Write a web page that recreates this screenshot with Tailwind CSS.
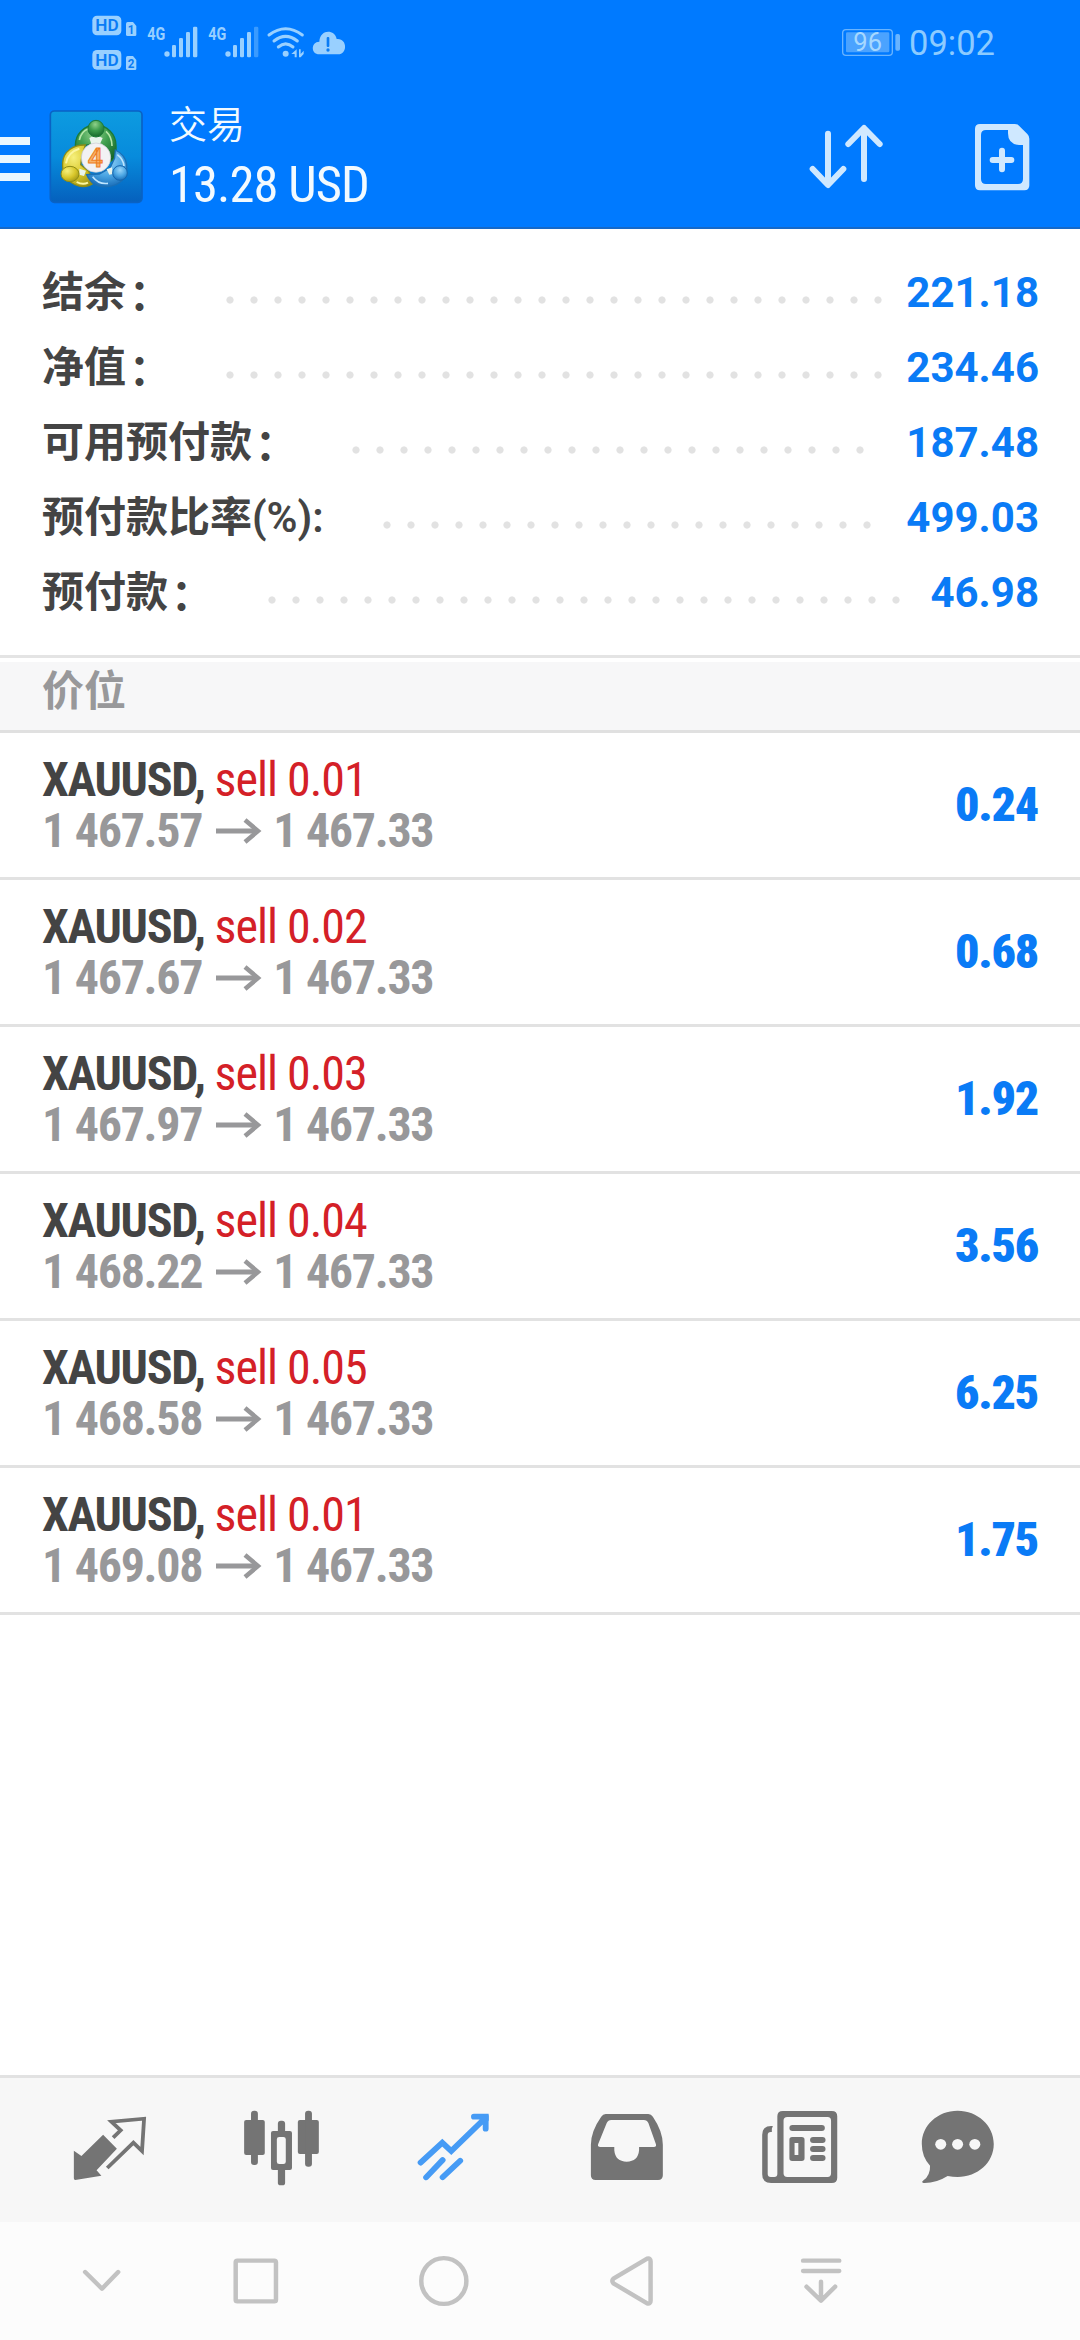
<!DOCTYPE html>
<html lang="zh-CN">
<head>
<meta charset="utf-8">
<title>交易</title>
<script src="https://cdn.jsdelivr.net/npm/@tailwindcss/browser@4"></script>
</head>
<body class="flex h-[2340px] w-[1080px] flex-col overflow-hidden bg-white font-['Roboto','Noto_Sans_CJK_SC',sans-serif]">

<header class="h-[229px] shrink-0 border-b-2 border-[#1669c8] bg-[#007aff]">
  <!-- status bar -->
  <div class="flex h-[84px] pl-[60px]">
    <svg class="h-[84px] w-[320px]" viewBox="0 0 960 252" fill="#99d0ff">
      <rect x="97" y="47" width="87" height="59" rx="14"/>
      <rect x="97" y="150" width="87" height="59" rx="14"/>
      <path d="M203 66h16l10 12v26q0 4-4 4h-22q-5 0-5-4V71q0-5 5-5z"/>
      <path d="M203 168h16l10 12v26q0 4-4 4h-22q-5 0-5-4v-33q0-5 5-5z"/>
      <g fill="#0a7cf5" font-family="Roboto" font-weight="700">
        <text x="106" y="94" font-size="48" font-weight="600" textLength="70" lengthAdjust="spacingAndGlyphs">HD</text>
        <text x="106" y="197" font-size="48" font-weight="600" textLength="70" lengthAdjust="spacingAndGlyphs">HD</text>
        <text x="203" y="102" font-size="36" textLength="20" lengthAdjust="spacingAndGlyphs">1</text>
        <text x="203" y="204" font-size="36" textLength="20" lengthAdjust="spacingAndGlyphs">2</text>
      </g>
      <g font-family="Roboto" font-weight="700" font-size="57">
        <text x="262" y="121" textLength="54" lengthAdjust="spacingAndGlyphs">4G</text>
        <text x="445" y="121" textLength="54" lengthAdjust="spacingAndGlyphs">4G</text>
      </g>
      <circle cx="321" cy="162" r="8"/>
      <rect x="336" y="135" width="12" height="37" rx="4"/>
      <rect x="357" y="114" width="12" height="58" rx="4"/>
      <rect x="378" y="96" width="12" height="76" rx="4"/>
      <rect x="399" y="80" width="13" height="92" rx="4"/>
      <circle cx="504" cy="162" r="8"/>
      <rect x="519" y="135" width="12" height="37" rx="4"/>
      <rect x="540" y="114" width="12" height="58" rx="4"/>
      <rect x="561" y="96" width="12" height="76" rx="4"/>
      <rect x="582" y="80" width="13" height="92" rx="4" fill="#3a9bff"/>
      <g fill="none" stroke="#99d0ff" stroke-width="9" stroke-linecap="round">
        <path d="M627 105Q677 67 727 105"/>
        <path d="M642 123Q677 95 712 123"/>
        <path d="M655 141Q677 122 699 141"/>
      </g>
      <circle cx="677" cy="161" r="9"/>
      <path d="M710 148v24h-6v-10h-10zM717 148h5v14l9-10v10l-9 10h-5z"/>
      <path d="M778 163c-26 0-26-38 0-38 2-38 46-38 52-8 32-4 34 46 4 46z"/>
      <rect x="800" y="111" width="8" height="30" rx="3" fill="#0a7cf5"/>
      <circle cx="804" cy="150" r="5" fill="#0a7cf5"/>
    </svg>
    <svg class="ml-[451px] h-[84px] w-[70px]" viewBox="150 0 210 252">
      <rect x="185" y="89" width="149" height="77" rx="10" fill="none" stroke="#69b4ff" stroke-width="4"/>
      <rect x="195" y="97" width="130" height="60" rx="4" fill="#4ba3ff"/>
      <rect x="343" y="102" width="14" height="50" rx="5" fill="#69b4ff"/>
      <text x="217" y="152" font-family="Roboto" font-size="75" fill="#a6d8ff" textLength="86" lengthAdjust="spacingAndGlyphs">96</text>
    </svg>
    <span class="mt-[25px] ml-[8px] h-[36px] text-[34.5px] leading-[36px] text-[#8ccbff]">09:02</span>
  </div>
  <!-- title bar -->
  <div class="flex h-[143px]">
    <div class="flex w-[30px] flex-col gap-[10px] pt-[53px]">
      <i class="h-[8px] bg-[#eaf7ff]"></i><i class="h-[8px] bg-[#eaf7ff]"></i><i class="h-[8px] bg-[#eaf7ff]"></i>
    </div>
    <svg class="mt-[22px] ml-[16px] h-[100px] w-[100px]" viewBox="0 0 300 300">
      <defs>
        <linearGradient id="bg" x1="0" y1="0" x2="0" y2="1"><stop offset="0" stop-color="#0d9be0"/><stop offset=".5" stop-color="#078bdc"/><stop offset="1" stop-color="#0560bd"/></linearGradient>
        <radialGradient id="gr" cx=".45" cy=".25" r=".8"><stop offset="0" stop-color="#8fd08a"/><stop offset=".45" stop-color="#3f9e4e"/><stop offset="1" stop-color="#136327"/></radialGradient>
        <radialGradient id="ye" cx=".35" cy=".3" r=".9"><stop offset="0" stop-color="#f6f07c"/><stop offset=".5" stop-color="#d8c62a"/><stop offset="1" stop-color="#8a8412"/></radialGradient>
        <radialGradient id="bl" cx=".5" cy=".3" r=".8"><stop offset="0" stop-color="#9ad6fa"/><stop offset=".5" stop-color="#4aa5e3"/><stop offset="1" stop-color="#0a5cab"/></radialGradient>
      </defs>
      <rect x="13" y="15" width="275" height="274" rx="12" fill="url(#bg)" stroke="#0a62c4" stroke-width="5"/>
      <path d="M88 118A61 61 0 0 1 210 118C212 140 206 160 192 168L168 150 148 112 118 118Q98 122 90 132z" fill="url(#gr)" stroke="#1c7a38" stroke-width="4"/>
      <path d="M100 102q5-26 28-34M180 76q18 16 18 44" fill="none" stroke="#b5e6a8" stroke-width="5"/>
      <path d="M118 117C82 116 52 136 50 170Q48 190 58 210C80 244 118 250 144 230L128 196 104 176 108 150z" fill="url(#ye)" stroke="#8e8c16" stroke-width="4"/>
      <path d="M60 172q6-34 40-44M92 228q18 10 34 2" fill="none" stroke="#fbf6a0" stroke-width="6"/>
      <path d="M122 206Q140 246 184 242C222 240 246 214 242 176Q238 146 208 132L206 156 192 186 160 204z" fill="url(#bl)" stroke="#1b6fb5" stroke-width="4"/>
      <path d="M140 212q18 24 46 20M214 146q18 14 20 34" fill="none" stroke="#bfe6ff" stroke-width="5"/>
      <path d="M130 96q18-12 40 0l-8 18h-26zM100 188l20 6-6 16-14-4zM182 190l16-6 2 20-10 2z" fill="#e9f4ec"/>
      <ellipse cx="150" cy="68" rx="24" ry="25" fill="url(#gr)" stroke="#1c7a38" stroke-width="3"/>
      <ellipse cx="72" cy="204" rx="27" ry="23" fill="url(#ye)" stroke="#8e8c16" stroke-width="3"/>
      <ellipse cx="222" cy="201" rx="22" ry="22" fill="url(#bl)" stroke="#1565ad" stroke-width="3"/>
      <circle cx="150" cy="155" r="44" fill="#f2f1f4" stroke="#c9ccd2" stroke-width="2"/>
      <text x="148" y="183" text-anchor="middle" font-family="Roboto" font-size="80" font-weight="600" fill="#f7b26c" stroke="#ee7d1d" stroke-width="3">4</text>
    </svg>
    <div class="ml-[23px] flex flex-col text-[#f2faff]">
      <span class="mt-[18px] h-[46px] text-[38px] leading-[46px] font-[350]">交易</span>
      <span class="mt-[7px] h-[60px] text-[50.5px] leading-[60px] tracking-[-0.9px] font-['Roboto_Condensed','Roboto'] font-stretch-[75%]">13.28 USD</span>
    </div>
    <svg class="mt-[31px] ml-auto h-[80px] w-[90px]" viewBox="75 345 270 240" fill="none" stroke="#cfe8ff" stroke-width="18" stroke-linecap="round" stroke-linejoin="round">
      <path d="M144 401V552M98 507l46 48 46-48M252 537V388M205 432l47-48 47 48"/>
    </svg>
    <svg class="mt-[31px] mr-[40px] ml-[75px] h-[80px] w-[70px]" viewBox="570 345 210 240">
      <path fill="#cfe8ff" fill-rule="evenodd" d="M600 372h104q8 0 13 5l25 25q6 6 6 14v140q0 15-15 15H600q-15 0-15-15V387q0-15 15-15zM618 390q-15 0-15 15v132q0 15 15 15h96q15 0 15-15V435h-12q-33-2-33-35v-10z"/>
      <path d="M638 480h56M666 452v56" stroke="#cfe8ff" stroke-width="18" stroke-linecap="round"/>
    </svg>
  </div>
</header>

<main class="flex-1">
  <!-- account summary -->
  <section class="flex h-[426px] flex-col pt-[26px] pr-[41px] pl-[42px] text-[42px] font-semibold text-[#444]">
    <div class="flex h-[75px] items-center"><span>结余<span class="inline-block translate-x-[3px] translate-y-[3px]">：</span></span><i class="ml-[50px] h-[8px] w-[672px] translate-y-[7px] bg-[radial-gradient(circle,#e2e2e2_3.2px,transparent_4px)] bg-[length:24px_8px]"></i><b class="ml-auto font-bold text-[#0a7bf6]">221.18</b></div>
    <div class="flex h-[75px] items-center"><span>净值<span class="inline-block translate-x-[3px] translate-y-[3px]">：</span></span><i class="ml-[50px] h-[8px] w-[672px] translate-y-[7px] bg-[radial-gradient(circle,#e2e2e2_3.2px,transparent_4px)] bg-[length:24px_8px]"></i><b class="ml-auto font-bold text-[#0a7bf6]">234.46</b></div>
    <div class="flex h-[75px] items-center"><span>可用预付款<span class="inline-block translate-x-[3px] translate-y-[3px]">：</span></span><i class="ml-[50px] h-[8px] w-[528px] translate-y-[7px] bg-[radial-gradient(circle,#e2e2e2_3.2px,transparent_4px)] bg-[length:24px_8px]"></i><b class="ml-auto font-bold text-[#0a7bf6]">187.48</b></div>
    <div class="flex h-[75px] items-center"><span class="w-[283px] whitespace-nowrap">预付款比率(%):</span><i class="ml-[50px] h-[8px] w-[504px] translate-y-[7px] bg-[radial-gradient(circle,#e2e2e2_3.2px,transparent_4px)] bg-[length:24px_8px]"></i><b class="ml-auto font-bold text-[#0a7bf6]">499.03</b></div>
    <div class="flex h-[75px] items-center"><span>预付款<span class="inline-block translate-x-[3px] translate-y-[3px]">：</span></span><i class="ml-[50px] h-[8px] w-[648px] translate-y-[7px] bg-[radial-gradient(circle,#e2e2e2_3.2px,transparent_4px)] bg-[length:24px_8px]"></i><b class="ml-auto font-bold text-[#0a7bf6]">46.98</b></div>
  </section>

  <div class="border-t-3 border-[#e4e4e4] pt-[4px]">
    <h2 class="h-[71px] border-b-3 border-[#e0e0e0] bg-[#f7f7f8] pl-[42px] text-[42px] leading-[60px] font-semibold text-[#98989a]">价位</h2>
  </div>

  <!-- open positions -->
  <ul class="font-['Roboto_Condensed','Roboto'] text-[48px] font-bold font-stretch-[75%] tracking-[-1.3px]">
    <li class="flex h-[147px] items-center justify-between border-b-3 border-[#e2e2e2] px-[42px]">
      <div class="leading-[51px]">
        <p class="text-[#444]">XAUUSD, <span class="font-normal tracking-[-1px] text-[#d42027]">sell 0.01</span></p>
        <p class="flex items-center text-[#98989a]">1 467.57<svg class="mr-[11px] ml-[13px] h-[26px] w-[47px]" viewBox="0 0 47 26" fill="none" stroke="#98989a" stroke-width="5"><path d="M1 13h41"/><path d="M30 2l13 11-13 11" stroke-width="4.5"/></svg>1 467.33</p>
      </div>
      <b class="text-[#0a7bf6]">0.24</b>
    </li>
    <li class="flex h-[147px] items-center justify-between border-b-3 border-[#e2e2e2] px-[42px]">
      <div class="leading-[51px]">
        <p class="text-[#444]">XAUUSD, <span class="font-normal tracking-[-1px] text-[#d42027]">sell 0.02</span></p>
        <p class="flex items-center text-[#98989a]">1 467.67<svg class="mr-[11px] ml-[13px] h-[26px] w-[47px]" viewBox="0 0 47 26" fill="none" stroke="#98989a" stroke-width="5"><path d="M1 13h41"/><path d="M30 2l13 11-13 11" stroke-width="4.5"/></svg>1 467.33</p>
      </div>
      <b class="text-[#0a7bf6]">0.68</b>
    </li>
    <li class="flex h-[147px] items-center justify-between border-b-3 border-[#e2e2e2] px-[42px]">
      <div class="leading-[51px]">
        <p class="text-[#444]">XAUUSD, <span class="font-normal tracking-[-1px] text-[#d42027]">sell 0.03</span></p>
        <p class="flex items-center text-[#98989a]">1 467.97<svg class="mr-[11px] ml-[13px] h-[26px] w-[47px]" viewBox="0 0 47 26" fill="none" stroke="#98989a" stroke-width="5"><path d="M1 13h41"/><path d="M30 2l13 11-13 11" stroke-width="4.5"/></svg>1 467.33</p>
      </div>
      <b class="text-[#0a7bf6]">1.92</b>
    </li>
    <li class="flex h-[147px] items-center justify-between border-b-3 border-[#e2e2e2] px-[42px]">
      <div class="leading-[51px]">
        <p class="text-[#444]">XAUUSD, <span class="font-normal tracking-[-1px] text-[#d42027]">sell 0.04</span></p>
        <p class="flex items-center text-[#98989a]">1 468.22<svg class="mr-[11px] ml-[13px] h-[26px] w-[47px]" viewBox="0 0 47 26" fill="none" stroke="#98989a" stroke-width="5"><path d="M1 13h41"/><path d="M30 2l13 11-13 11" stroke-width="4.5"/></svg>1 467.33</p>
      </div>
      <b class="text-[#0a7bf6]">3.56</b>
    </li>
    <li class="flex h-[147px] items-center justify-between border-b-3 border-[#e2e2e2] px-[42px]">
      <div class="leading-[51px]">
        <p class="text-[#444]">XAUUSD, <span class="font-normal tracking-[-1px] text-[#d42027]">sell 0.05</span></p>
        <p class="flex items-center text-[#98989a]">1 468.58<svg class="mr-[11px] ml-[13px] h-[26px] w-[47px]" viewBox="0 0 47 26" fill="none" stroke="#98989a" stroke-width="5"><path d="M1 13h41"/><path d="M30 2l13 11-13 11" stroke-width="4.5"/></svg>1 467.33</p>
      </div>
      <b class="text-[#0a7bf6]">6.25</b>
    </li>
    <li class="flex h-[147px] items-center justify-between border-b-3 border-[#e2e2e2] px-[42px]">
      <div class="leading-[51px]">
        <p class="text-[#444]">XAUUSD, <span class="font-normal tracking-[-1px] text-[#d42027]">sell 0.01</span></p>
        <p class="flex items-center text-[#98989a]">1 469.08<svg class="mr-[11px] ml-[13px] h-[26px] w-[47px]" viewBox="0 0 47 26" fill="none" stroke="#98989a" stroke-width="5"><path d="M1 13h41"/><path d="M30 2l13 11-13 11" stroke-width="4.5"/></svg>1 467.33</p>
      </div>
      <b class="text-[#0a7bf6]">1.75</b>
    </li>
  </ul>
</main>

<!-- tab bar -->
<nav class="grid h-[147px] shrink-0 grid-cols-6 place-items-center border-t-3 border-[#e2e2e2] bg-[#f7f7f7] px-[24px] text-[#747474]">
  <svg class="h-[90px] w-[84px]" viewBox="198 135 244 270" preserveAspectRatio="none" fill="currentColor">
    <path d="M215 272l22 16 63-64 40 42-59 65 14 16-76 13q-4 0-4-5z"/>
    <path d="M329 233l22-22-27-26 95-9-6 97-25-25-76 76" fill="none" stroke="currentColor" stroke-width="11"/>
  </svg>
  <svg class="h-[90px] w-[84px]" viewBox="697 135 244 270" preserveAspectRatio="none" fill="currentColor">
    <rect x="709" y="180" width="60" height="105" rx="6"/><rect x="729" y="152" width="20" height="163" rx="9"/>
    <rect x="865" y="180" width="61" height="102" rx="6"/><rect x="886" y="152" width="20" height="168" rx="9"/>
    <rect x="807" y="182" width="21" height="40" rx="9"/><rect x="807" y="322" width="21" height="54" rx="8"/>
    <path fill-rule="evenodd" d="M793 213h49q6 0 6 6v105q0 6-6 6h-49q-6 0-6-6V219q0-6 6-6zM811 231q-7 0-7 7v67q0 7 7 7h12q7 0 7-7v-67q0-7-7-7z"/>
  </svg>
  <svg class="h-[90px] w-[84px]" viewBox="1197 135 244 270" preserveAspectRatio="none" fill="none" stroke="#469bf5" stroke-width="17" stroke-linecap="round">
    <path d="M1222 308l63-60 26 25 96-96M1377 170h34v36" />
    <path d="M1402 162h12q6 0 6 6v16z" fill="#469bf5" stroke="none"/>
    <path d="M1238 352l48-52M1286 352l51-50"/>
  </svg>
  <svg class="h-[90px] w-[84px]" viewBox="127 135 244 270" preserveAspectRatio="none" fill="currentColor">
    <path fill-rule="evenodd" d="M190 162h124q8 0 13 8 29 44 29 84v92q0 14-14 14H161q-14 0-14-14v-92q0-40 30-84 5-8 13-8zM206 180q-9 0-13 9l-25 64q-2 8 6 8h41v10q3 34 36 34t36-34v-10h43q8 0 6-8l-22-64q-4-9-13-9z"/>
  </svg>
  <svg class="h-[90px] w-[84px]" viewBox="628 135 244 270" preserveAspectRatio="none" fill="currentColor">
    <path fill-rule="evenodd" d="M706 153h142q16 0 16 16v184q0 16-16 16H672q-26 0-26-26V224q0-26 26-26h5l-3 8v10h-3q-9 0-9 9v117q0 9 9 9h10q9 0 9-9V169q0-16 16-16zM719 171q-11 0-11 11v158q0 11 11 11h117q10 0 10-11V182q0-11-10-11z"/>
    <rect x="725" y="195" width="103" height="18" rx="9"/>
    <path fill-rule="evenodd" d="M733 231h28q8 0 8 8v56q0 8-8 8h-28q-8 0-8-8v-56q0-8 8-8zM740 249v36h11v-36z"/>
    <rect x="785" y="231" width="45" height="18" rx="9"/><rect x="785" y="258" width="45" height="18" rx="9"/><rect x="785" y="285" width="45" height="18" rx="9"/>
  </svg>
  <svg class="h-[90px] w-[84px] overflow-visible" viewBox="1127 135 244 270" preserveAspectRatio="none" fill="currentColor">
    <path d="M1213 152c58 0 105 44 105 100s-47 99-105 99q-14 0-29-3-34 22-70 21-8-2 0-8 20-16 19-44-24-26-24-65c0-56 46-100 104-100z"/>
    <g fill="#f7f7f7"><circle cx="1164" cy="253" r="16"/><circle cx="1213" cy="253" r="16"/><circle cx="1263" cy="253" r="16"/></g>
  </svg>
</nav>

<!-- system navigation -->
<nav class="flex h-[118px] shrink-0 items-center bg-[#fcfcfc] pl-[60px]">
  <svg class="h-[60px] w-[84px]" viewBox="174 573 244 180" preserveAspectRatio="none" fill="none" stroke="#c2c2c2" stroke-width="13" stroke-linecap="round" stroke-linejoin="round"><path d="M247 636l49 50 47-50"/></svg>
  <svg class="ml-[70px] h-[60px] w-[84px]" viewBox="621.5 573 244 180" preserveAspectRatio="none" fill="none" stroke="#c2c2c2" stroke-width="13"><rect x="684.500" y="602" width="117" height="122" rx="5"/></svg>
  <svg class="ml-[104px] h-[60px] w-[84px]" viewBox="1167.500 573 244 180" preserveAspectRatio="none" fill="none" stroke="#c2c2c2" stroke-width="13"><ellipse cx="1289" cy="663" rx="65.500" ry="68.500"/></svg>
  <svg class="ml-[104px] h-[60px] w-[84px]" viewBox="145 573 244 180" preserveAspectRatio="none" fill="none" stroke="#c2c2c2" stroke-width="13" stroke-linejoin="round"><path d="M213 656L311 596q10-3 10 8v118q0 11-10 8L213 670q-6-7 0-14z"/></svg>
  <svg class="ml-[105px] h-[60px] w-[84px]" viewBox="694 573 244 180" preserveAspectRatio="none" fill="none" stroke="#c2c2c2" stroke-width="13" stroke-linecap="round" stroke-linejoin="round"><path d="M764 602h105M764 633h105M816 665v56M774 680l42 42 41-42"/></svg>
</nav>
</body>
</html>
